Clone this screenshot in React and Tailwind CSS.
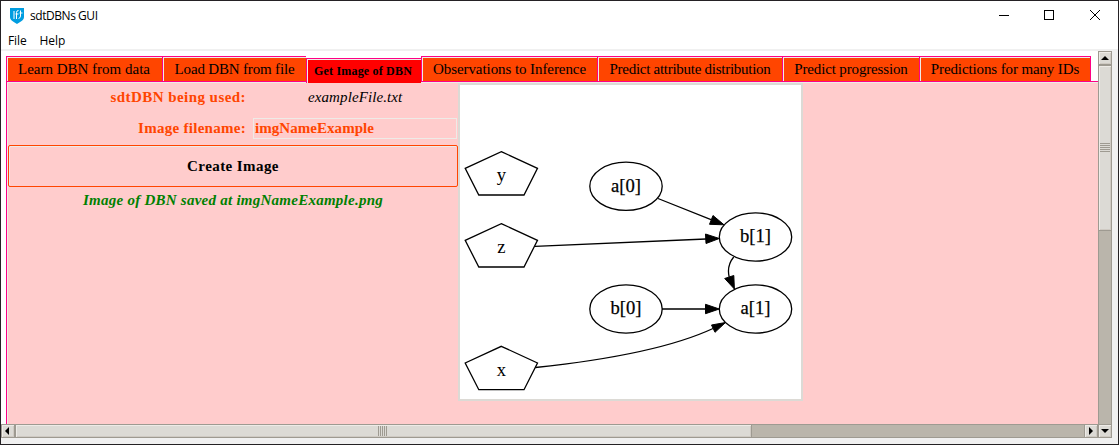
import React from "react";

const TABS = [
  { label: "Learn DBN from data", width: "w-[156px]", text: "pr-px" },
  { label: "Load DBN from file", width: "w-[144px]", text: "tracking-[-0.17px]" },
  { label: "Get Image of DBN", width: "w-[115px]", active: true },
  { label: "Observations to Inference", width: "w-[176px]", text: "tracking-[-0.08px]" },
  { label: "Predict attribute distribution", width: "w-[185px]", text: "tracking-[-0.27px]" },
  { label: "Predict progression", width: "w-[137px]", text: "tracking-[-0.15px]" },
  { label: "Predictions for many IDs", width: "w-[172px]", text: "tracking-[-0.12px]" },
];

function TitleBar() {
  return (
    <header className="flex h-[29px] shrink-0 items-center bg-white pl-[9px] font-['Open_Sans','Noto_Sans',sans-serif] text-[12px] text-black">
      <svg width="14" height="16" viewBox="0 0 14 16" className="mt-px shrink-0">
        <path d="M0 0h14v9c0 3.500-4 5-7 7-3-2-7-3.500-7-7z" fill="#009de0" />
        <path d="M4 3v8M6.500 11V4.500q0-2 2-2M5.500 6h3M10.500 2.500v5.500q0 2-2 2.500M9.500 5h3" fill="none" stroke="#fff" strokeWidth="1" />
      </svg>
      <span className="ml-[6px] tracking-[-0.45px]">sdtDBNs GUI</span>
      <svg width="124" height="12" viewBox="0 0 124 12" className="mr-[-5px] mb-px ml-auto" fill="none" stroke="#000" shapeRendering="crispEdges">
        <path d="M0 6.500h10M45.500 1.500h9v9h-9z" />
        <path d="M91 1l10 10M101 1L91 11" shapeRendering="auto" />
      </svg>
    </header>
  );
}

function Tab({ label, width, text, active }) {
  return active ? (
    <div className={`${width} mt-[2px] flex h-[25px] shrink-0 items-center justify-center border-t border-l border-[#ff0084] bg-[#ff0000] text-[12px] font-bold shadow-[inset_1px_1px_#eeebe7]`}>
      <span className="pr-[2px] tracking-[0.19px] whitespace-nowrap">{label}</span>
    </div>
  ) : (
    <div className={`${width} flex h-[26px] shrink-0 items-center justify-center border-t border-b border-l border-[#ff0084] bg-[#ff4500] text-[15px] shadow-[inset_1px_1px_#eeebe7] last:border-r`}>
      <span className={`${text} whitespace-nowrap`}>{label}</span>
    </div>
  );
}

function FormPanel() {
  return (
    <section className="flex w-[451px] shrink-0 flex-col pl-px text-[15px]">
      <div className="flex h-[31px] items-center">
        <span className="w-[238px] text-right font-bold tracking-[0.44px] text-[#ff4500]">sdtDBN being used:</span>
        <span className="ml-[62px] pb-px tracking-[0.1px] text-black italic">exampleFile.txt</span>
      </div>
      <div className="flex h-[31px] items-center">
        <span className="w-[238px] text-right font-bold tracking-[0.28px] text-[#ff4500]">Image filename:</span>
        <span className="ml-[7px] flex h-[21px] w-[204px] items-center border border-[#eeebe7] pl-px font-bold tracking-[0.05px] text-[#ff4500]">imgNameExample</span>
      </div>
      <button className="mt-px flex h-[42px] w-[450px] items-center justify-center rounded-[2px] border border-[#ff4500] font-bold tracking-[0.42px] text-black shadow-[inset_1px_1px_#eeebe7]">
        Create Image
      </button>
      <p className="mt-[3px] w-[450px] text-center leading-[20px] font-bold tracking-[0.25px] text-[#008000] italic">
        Image of DBN saved at imgNameExample.png
      </p>
    </section>
  );
}

const PENTAGONS = [
  { label: "y", dy: 0 },
  { label: "z", dy: 72 },
  { label: "x", dy: 194.7 },
];
const ELLIPSES = [
  { label: "a[0]", x: 626, y: 186.3 },
  { label: "b[0]", x: 626, y: 309 },
  { label: "b[1]", x: 755.5, y: 237 },
  { label: "a[1]", x: 755.5, y: 309 },
];

function Graph() {
  return (
    <svg width="345" height="318" viewBox="458 83 345 318" className="block shrink-0" fontFamily="'Liberation Serif', serif" fontSize="18.600" textAnchor="middle">
      <rect x="458" y="83" width="345" height="318" fill="#dcdad5" />
      <rect x="460" y="85" width="341" height="314" fill="#fff" />
      <g fill="none" stroke="#000" strokeWidth="1.300">
        {PENTAGONS.map((p) => (
          <path key={p.label} transform={`translate(0 ${p.dy})`} d="M501.300 151.600L537.500 168.300 524 195H478.800L465.200 168.300z" />
        ))}
        {ELLIPSES.map((e) => (
          <ellipse key={e.label} cx={e.x} cy={e.y} rx="36.200" ry="24.100" />
        ))}
        <path d="M658 198.500L711 219.700M535 246.300L706 239M662 309H706M733.700 257C728 264 727.500 270 729.200 277M535.500 367.500C597 361 669 349 713 328.500" />
      </g>
      <g fill="#000" stroke="#000">
        <path d="M724 224.800L709.500 224.300 713 215.500z" />
        <path d="M719.300 238.500L706 243.500 705.500 234z" />
        <path d="M719.300 309L705.500 313.700V304.300z" />
        <path d="M734.400 289L724.700 278.500 733.800 275.500z" />
        <path d="M725.500 322.500L711.500 325 715 332.300z" />
      </g>
      {PENTAGONS.map((p) => (
        <text key={p.label} x="501.300" y={181 + p.dy}>{p.label}</text>
      ))}
      {ELLIPSES.map((e) => (
        <text key={e.label} x={e.x} y={e.y + 5.200} stroke="#000" strokeWidth="0.250">{e.label}</text>
      ))}
    </svg>
  );
}

const RAISED = "bg-[#dcdad5] shadow-[inset_1px_1px_#eeebe7,inset_-1px_-1px_#cfcac3]";

function VerticalBar() {
  return (
    <div className="flex w-[14px] shrink-0 flex-col border border-[#9e9a91] bg-[#bab5ab]">
      <div className={`${RAISED} flex h-[12px] items-center justify-center`}>
        <svg width="8" height="4" viewBox="0 0 8 4"><path d="M4 0L8 4H0z" /></svg>
      </div>
      <div className="h-[2px] bg-[#9e9a91]" />
      <div className={`${RAISED} flex h-[164px] flex-col items-center justify-center gap-px pb-px`}>
        {[0, 1, 2, 3, 4].map((i) => <i key={i} className="h-px w-[10px] bg-[#9e9a91]" />)}
      </div>
      <div className="h-px bg-[#9e9a91]" />
      <div className={`${RAISED} mt-auto flex h-[12px] items-center justify-center outline outline-[#9e9a91]`}>
        <svg width="8" height="4" viewBox="0 0 8 4"><path d="M0 0h8L4 4z" /></svg>
      </div>
    </div>
  );
}

function HorizontalBar() {
  return (
    <div className="flex h-[14px] w-[1097px] shrink-0 border border-[#9e9a91] bg-[#bab5ab]">
      <div className={`${RAISED} flex w-[12px] items-center justify-center pr-[2px]`}>
        <svg width="4" height="8" viewBox="0 0 4 8"><path d="M4 0v8L0 4z" /></svg>
      </div>
      <div className="w-[2px] bg-[#9e9a91]" />
      <div className={`${RAISED} flex w-[735px] items-center justify-center gap-px pr-[2px]`}>
        {[0, 1, 2, 3, 4].map((i) => <i key={i} className="h-[10px] w-px bg-[#9e9a91]" />)}
      </div>
      <div className="w-px bg-[#9e9a91]" />
      <div className={`${RAISED} ml-auto flex w-[12px] items-center justify-center outline outline-[#9e9a91]`}>
        <svg width="4" height="8" viewBox="0 0 4 8"><path d="M0 0l4 4-4 4z" /></svg>
      </div>
    </div>
  );
}

export default function App() {
  return (
    <div className="flex h-[445px] w-[1119px] flex-col overflow-hidden border border-[#242124] bg-[#f0f0f0] font-['Liberation_Serif',serif]">
      <TitleBar />
      <nav className="flex h-[19px] shrink-0 items-center gap-[13px] bg-white pt-[2px] pl-[7px] font-['Open_Sans','Noto_Sans',sans-serif] text-[12px] tracking-[-0.1px] text-black">
        <span>File</span>
        <span>Help</span>
      </nav>
      <div className="mt-[2px] flex h-[387px] shrink-0">
        <div className="flex w-[1097px] flex-col">
          <main className="flex h-[373px] flex-col bg-white pt-[5px] pl-[5px]">
            <div className="z-10 flex h-[26px] shrink-0 text-black shadow-[inset_0_-1px_#ff0084]">
              {TABS.map((tab) => <Tab key={tab.label} {...tab} />)}
            </div>
            <div className="flex min-h-0 flex-1 items-start border-l border-[#ff0084] bg-[#ffcccc] shadow-[inset_1px_1px_#eeebe7]">
              <FormPanel />
              <div className="pt-px"><Graph /></div>
            </div>
          </main>
          <HorizontalBar />
        </div>
        <VerticalBar />
      </div>
    </div>
  );
}
